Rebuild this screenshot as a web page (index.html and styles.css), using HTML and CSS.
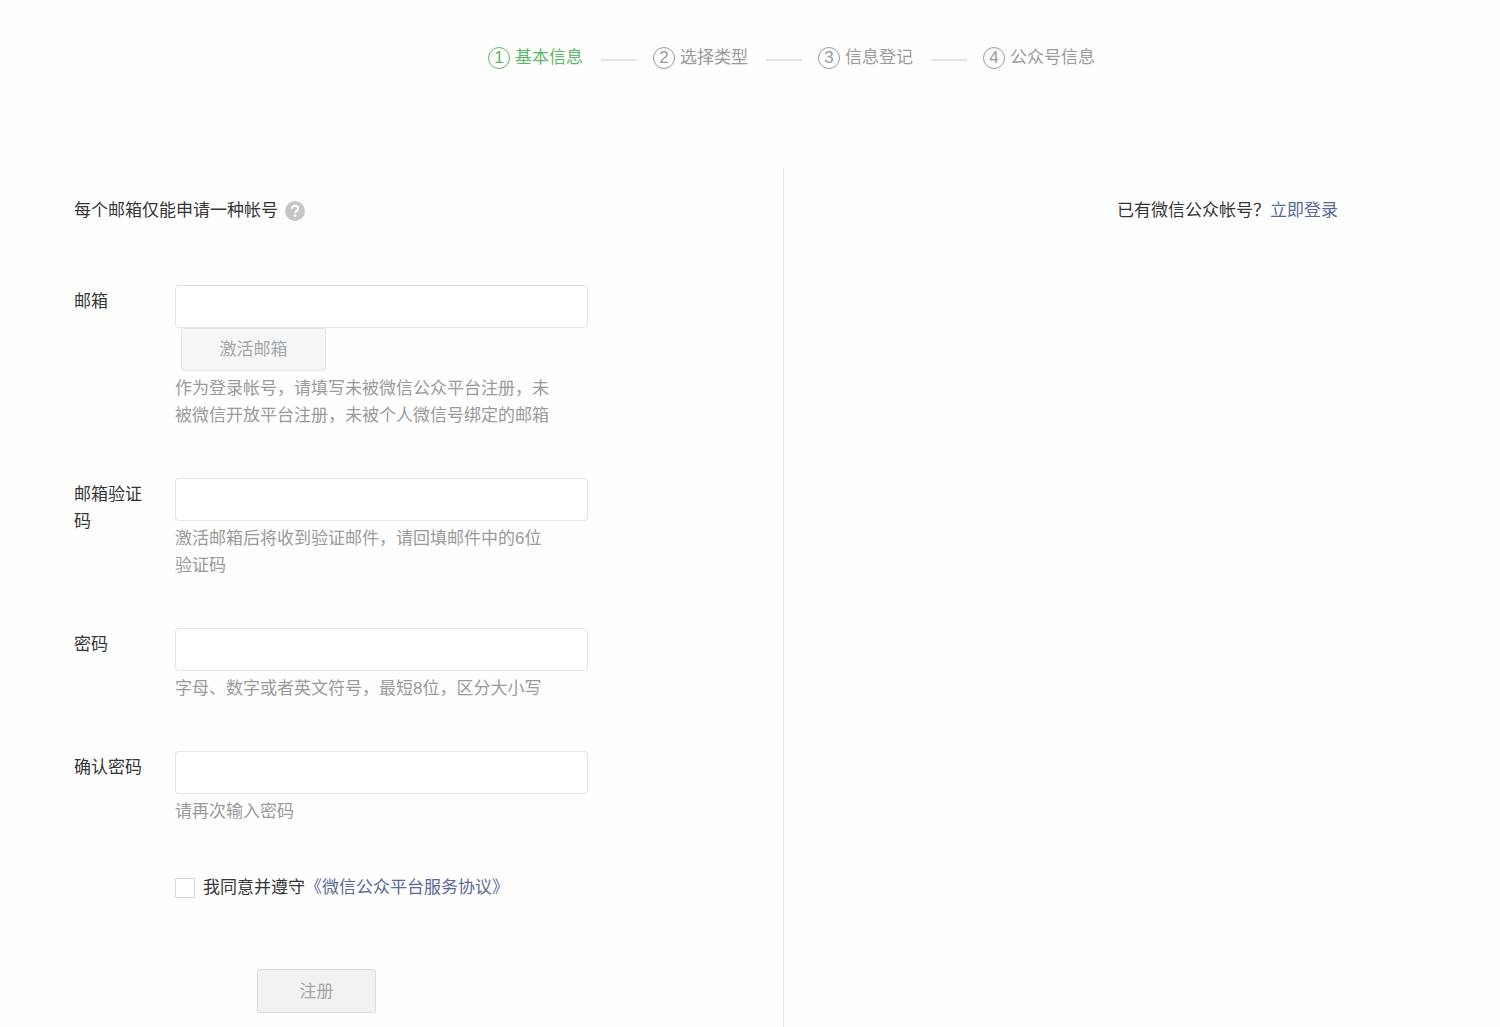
FILE: index.html
```html
<!DOCTYPE html>
<html lang="zh-CN">
<head>
  <meta charset="utf-8">
  <meta name="viewport" content="width=device-width, initial-scale=1">
  <title>注册公众号</title>
  <link rel="stylesheet" href="styles.css">
</head>
<body>
  <header class="header">
    <ol class="steps">
      <li class="step step-active"><span class="step-number">1</span>基本信息</li>
      <li class="step"><span class="step-number">2</span>选择类型</li>
      <li class="step"><span class="step-number">3</span>信息登记</li>
      <li class="step"><span class="step-number">4</span>公众号信息</li>
    </ol>
  </header>
  <main class="main">
    <section class="register">
      <p class="notice">每个邮箱仅能申请一种帐号
        <svg class="help" viewBox="0 0 20 20" aria-hidden="true">
          <circle cx="10" cy="10" r="10" fill="#c6c6c6"/>
          <path d="M6.9 7.8C6.9 5.9 8.1 4.8 10 4.8s3.2 1.1 3.2 2.7c0 2.2-2.9 2.2-2.9 4.4" fill="none" stroke="#fff" stroke-width="2"/>
          <circle cx="10.2" cy="14.6" r="1.3" fill="#fff"/>
        </svg>
      </p>
      <form class="form">
        <div class="field">
          <label class="label" for="email">邮箱</label>
          <div class="control">
            <input class="input" id="email" type="email">
            <button class="button activate" type="button" disabled>激活邮箱</button>
            <p class="hint">作为登录帐号，请填写未被微信公众平台注册，未被微信开放平台注册，未被个人微信号绑定的邮箱</p>
          </div>
        </div>
        <div class="field">
          <label class="label" for="code">邮箱验证码</label>
          <div class="control">
            <input class="input" id="code" type="text">
            <p class="hint">激活邮箱后将收到验证邮件，请回填邮件中的6位验证码</p>
          </div>
        </div>
        <div class="field">
          <label class="label" for="password">密码</label>
          <div class="control">
            <input class="input" id="password" type="password">
            <p class="hint">字母、数字或者英文符号，最短8位，区分大小写</p>
          </div>
        </div>
        <div class="field">
          <label class="label" for="confirm">确认密码</label>
          <div class="control">
            <input class="input" id="confirm" type="password">
            <p class="hint">请再次输入密码</p>
          </div>
        </div>
        <div class="agreement">
          <input class="checkbox" id="agree" type="checkbox">
          <span><label for="agree">我同意并遵守</label><a class="link" href="#agreement">《微信公众平台服务协议》</a></span>
        </div>
        <button class="button submit" type="submit" disabled>注册</button>
      </form>
    </section>
    <aside class="login">
      <p class="login-text">已有微信公众帐号？<a class="link" href="#login">立即登录</a></p>
    </aside>
  </main>
</body>
</html>
```
FILE: styles.css
```css
* {
  box-sizing: border-box;
}

body {
  margin: 0;
  min-height: 100vh;
  display: flex;
  flex-direction: column;
  background: #fefefe;
  color: #353535;
  font-family: "Liberation Sans", "Noto Sans CJK SC", sans-serif;
  font-size: 17px;
  line-height: 27px;
}

p {
  margin: 0;
}

.header {
  padding: 44px 0 97px 83px;
}

.steps {
  display: flex;
  justify-content: center;
  margin: 0;
  padding: 0;
  list-style: none;
}

.step {
  display: flex;
  align-items: center;
  color: #9a9a9a;
}

.step:not(:last-child)::after {
  content: "";
  width: 36px;
  height: 2px;
  margin: 4px 16px 0 18px;
  background: #e5e5e5;
}

.step-active {
  color: #5bb865;
}

.step-number {
  width: 22px;
  height: 22px;
  margin-right: 5px;
  border: 1px solid currentColor;
  border-radius: 50%;
  line-height: 20px;
  text-align: center;
}

.main {
  display: flex;
  flex: 1;
}

.register {
  width: 52.2%;
  padding: 29px 0 14px 74px;
}

.notice {
  display: flex;
  align-items: center;
  gap: 7px;
}

.help {
  width: 20px;
  height: 20px;
}

.form {
  padding-top: 61px;
}

.field {
  display: flex;
  margin-bottom: 49px;
}

.label {
  width: 76px;
  margin-right: 25px;
  padding-top: 3px;
}

.control {
  flex: 0 1 413px;
}

.input {
  display: block;
  width: 100%;
  height: 43px;
  padding: 0 10px;
  border: 1px solid #e4e4e4;
  border-radius: 4px;
  background: #fff;
  color: inherit;
  font: inherit;
}

.button {
  display: block;
  border: 1px solid #e4e5e6;
  border-radius: 3px;
  color: #a6a6a6;
  font: inherit;
}

.activate {
  width: 145px;
  height: 43px;
  margin-left: 6px;
  background: #f5f6f8;
}

.hint {
  max-width: 380px;
  padding-top: 4px;
  color: #9a9a9a;
}

.agreement {
  display: flex;
  align-items: center;
  gap: 8px;
  margin-left: 101px;
}

.checkbox {
  appearance: none;
  width: 20px;
  height: 20px;
  margin: 0;
  border: 1px solid #d9d9d9;
  background: #fff;
}

.submit {
  width: 119px;
  height: 44px;
  margin: 68px 0 0 183px;
  border-color: #d9dadb;
  background: #f1f2f4;
}

.link {
  color: #586a9a;
  text-decoration: none;
}

.login {
  flex: 1;
  padding: 29px 162px 0 20px;
  border-left: 1px solid #e7e7e7;
  text-align: right;
}
```
